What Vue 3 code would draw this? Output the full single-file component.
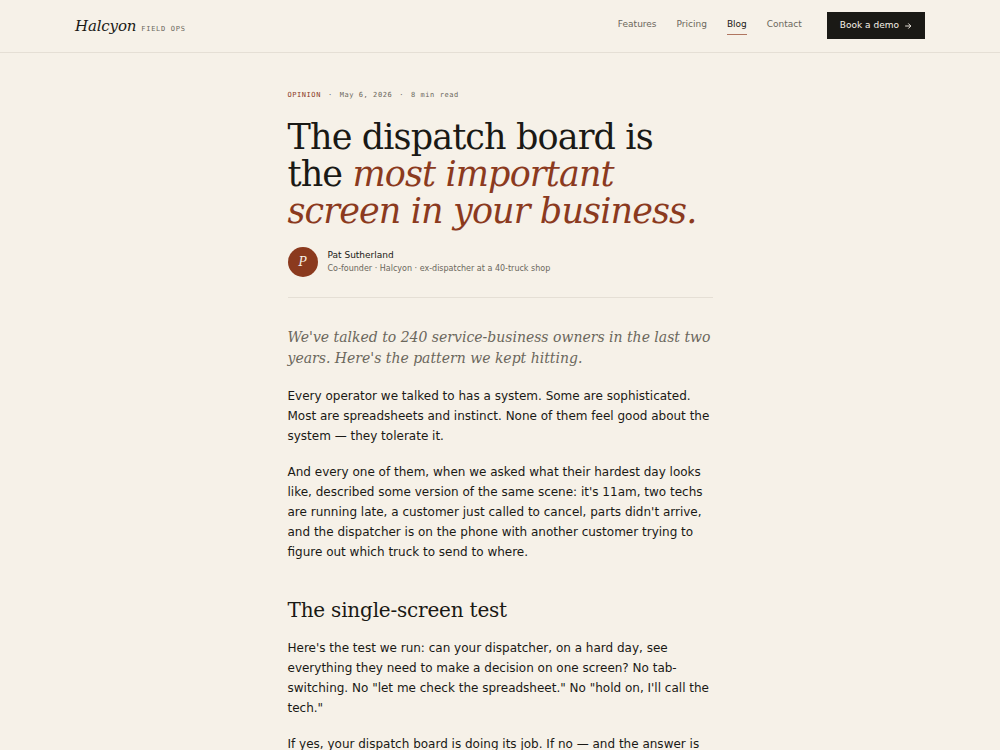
<script setup>
const links = ['Features', 'Pricing', 'Blog', 'Contact']
const current = 'Blog'
const opening = [
  'Every operator we talked to has a system. Some are sophisticated. Most are spreadsheets and instinct. None of them feel good about the system — they tolerate it.',
  "And every one of them, when we asked what their hardest day looks like, described some version of the same scene: it's 11am, two techs are running late, a customer just called to cancel, parts didn't arrive, and the dispatcher is on the phone with another customer trying to figure out which truck to send to where.",
]
const test = [
  'Here\'s the test we run: can your dispatcher, on a hard day, see everything they need to make a decision on one screen? No tab-switching. No "let me check the spreadsheet." No "hold on, I\'ll call the tech."',
  'If yes, your dispatch board is doing its job. If no — and the answer is',
]
</script>

<template>
  <div class="page">
    <header class="site-header">
      <div class="bar">
        <a class="brand" href="#">
          <span class="brand-name">Halcyon</span>
          <span class="brand-tag">FIELD OPS</span>
        </a>
        <div class="actions">
          <nav class="nav" aria-label="Main">
            <a
              v-for="link in links"
              :key="link"
              href="#"
              class="nav-link"
              :class="{ active: link === current }"
              :aria-current="link === current ? 'page' : undefined"
            >{{ link }}</a>
          </nav>
          <button class="demo" type="button">
            Book a demo
            <svg class="arrow" viewBox="0 0 14 14" aria-hidden="true">
              <path d="M2 7h10M7.5 2.5L12 7l-4.500 4.500" />
            </svg>
          </button>
        </div>
      </div>
    </header>

    <main class="article">
      <div class="meta">
        <span class="category">OPINION</span>
        <span>·</span>
        <span>May 6, 2026</span>
        <span>·</span>
        <span>8 min read</span>
      </div>
      <h1 class="title">The dispatch board is the <em>most important screen in your business.</em></h1>
      <div class="author">
        <div class="avatar" aria-hidden="true">P</div>
        <div>
          <div class="author-name">Pat Sutherland</div>
          <div class="author-role">Co-founder · Halcyon · ex-dispatcher at a 40-truck shop</div>
        </div>
      </div>
      <p class="lede">We've talked to 240 service-business owners in the last two years. Here's the pattern we kept hitting.</p>
      <p v-for="text in opening" :key="text" class="copy">{{ text }}</p>
      <h2 class="subhead">The single-screen test</h2>
      <p v-for="text in test" :key="text" class="copy">{{ text }}</p>
    </main>
  </div>
</template>

<style>
body {
  margin: 0;
  background: #f6f1e8;
}
</style>

<style scoped>
.page {
  height: 100vh;
  overflow: hidden;
  background: #f6f1e8;
  color: #1a1915;
  font-family: "DejaVu Sans", sans-serif;
}
.site-header {
  border-bottom: 1px solid #e5dfd5;
}
.bar {
  display: flex;
  align-items: center;
  justify-content: space-between;
  max-width: 850px;
  margin: 0 auto;
  padding: 12px 20px 13px;
}
.brand {
  display: flex;
  align-items: baseline;
  gap: 5px;
  padding-top: 4px;
  color: inherit;
  text-decoration: none;
}
.brand-name {
  font: italic 15px/20px "DejaVu Serif", serif;
  letter-spacing: -0.01em;
}
.brand-tag {
  font: 7px/20px "DejaVu Sans Mono", monospace;
  letter-spacing: 0.1em;
  color: #6b675c;
}
.actions {
  display: flex;
  align-items: center;
  gap: 25px;
}
.nav {
  display: flex;
  gap: 20px;
}
.nav-link {
  padding-bottom: 2px;
  border-bottom: 1px solid transparent;
  font-size: 9px;
  line-height: 15px;
  color: #6b675c;
  text-decoration: none;
}
.nav-link.active {
  color: #1a1915;
  border-bottom-color: #b07660;
}
.demo {
  display: flex;
  align-items: center;
  gap: 5px;
  padding: 6px 12px;
  border: 1px solid #1a1915;
  border-radius: 0;
  background: #1a1915;
  color: #f6f1e8;
  font: 9px/13px "DejaVu Sans", sans-serif;
}
.arrow {
  width: 8px;
  height: 8px;
  fill: none;
  stroke: currentColor;
  stroke-width: 1.6;
}
.article {
  max-width: 425px;
  margin: 0 auto;
  padding: 37px 20px 0;
}
.meta {
  display: flex;
  gap: 7px;
  font: 7px/11px "DejaVu Sans Mono", monospace;
  letter-spacing: 0.08em;
  color: #6b675c;
}
.category {
  color: #8b3a1e;
}
.title {
  margin: 18px 0 17px;
  font: 400 35px/37px "DejaVu Serif", serif;
  letter-spacing: -0.025em;
}
.title em {
  color: #8b3a1e;
}
.author {
  display: flex;
  align-items: center;
  gap: 10px;
  padding-bottom: 20px;
  border-bottom: 1px solid #e5dfd5;
}
.avatar {
  display: flex;
  align-items: center;
  justify-content: center;
  width: 30px;
  height: 30px;
  border-radius: 50%;
  background: #8b3a1e;
  color: #f6f1e8;
  font: italic 12px/16px "DejaVu Serif", serif;
}
.author-name {
  font-size: 9px;
  line-height: 13px;
}
.author-role {
  font-size: 8px;
  line-height: 13px;
  color: #6b675c;
}
.lede {
  margin: 29px 0 17px;
  font: italic 14px/21px "DejaVu Serif", serif;
  color: #6b675c;
}
.copy {
  margin: 0 0 16px;
  font-size: 12px;
  line-height: 20px;
}
.subhead {
  margin: 36px 0 16px;
  font: 400 20px/24px "DejaVu Serif", serif;
  letter-spacing: -0.01em;
}
</style>
